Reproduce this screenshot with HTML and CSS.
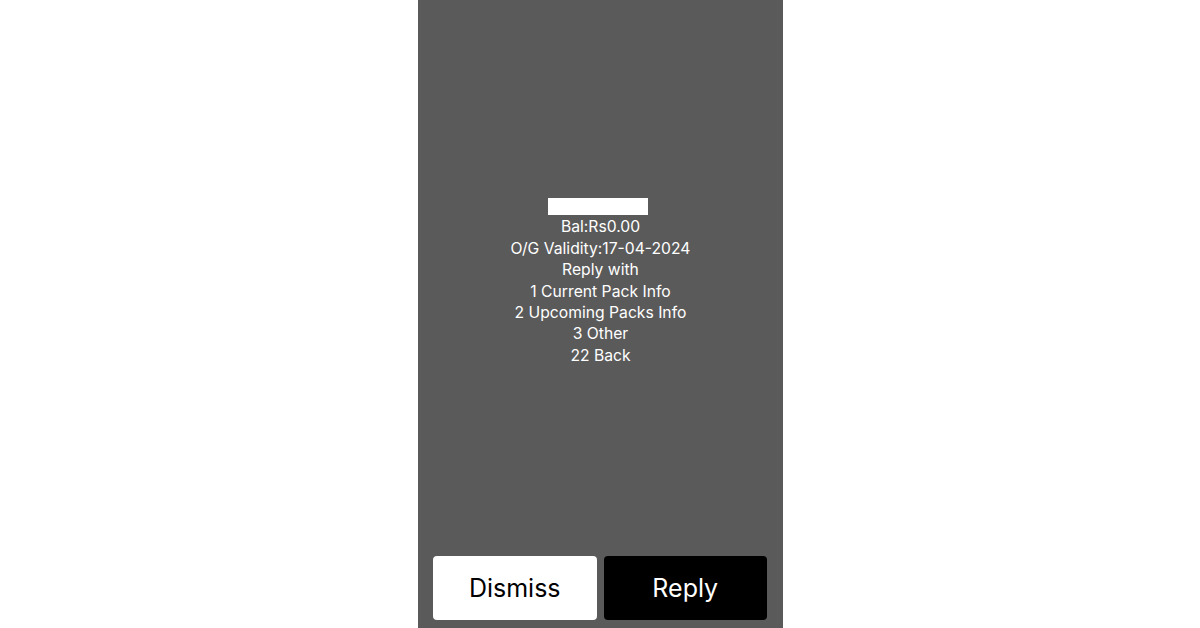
FILE: index.html
```html
<!DOCTYPE html>
<html>
<head>
<meta charset="utf-8">
<link rel="stylesheet" href="styles.css">
</head>
<body>
<div class="panel">
  <div class="content">
    <div class="message">
      <div class="redact"></div>
      <div class="line">Bal:Rs0.00</div>
      <div class="line">O/G Validity:17-04-2024</div>
      <div class="line">Reply with</div>
      <div class="line">1 Current Pack Info</div>
      <div class="line">2 Upcoming Packs Info</div>
      <div class="line">3 Other</div>
      <div class="line">22 Back</div>
    </div>
  </div>
  <div class="actions">
    <button class="btn btn-dismiss">Dismiss</button>
    <button class="btn btn-reply">Reply</button>
  </div>
</div>
</body>
</html>
```
FILE: styles.css
```css
html, body {
  margin: 0;
  padding: 0;
  background: #ffffff;
}
body {
  width: 1200px;
  height: 628px;
  overflow: hidden;
  font-family: Inter, "Noto Sans", sans-serif;
}
.panel {
  margin-left: 418px;
  width: 365px;
  height: 628px;
  background: #5a5a5a;
  display: flex;
  flex-direction: column;
}
.content {
  flex: 1;
  display: flex;
  align-items: center;
  justify-content: center;
  padding-top: 8px;
}
.message {
  display: flex;
  flex-direction: column;
  align-items: center;
  color: #ffffff;
  font-size: 15.7px;
  line-height: 21.4px;
  text-align: center;
}
.redact {
  width: 100px;
  height: 17px;
  margin-right: 6px;
  margin-bottom: 1.5px;
  background: #ffffff;
}
.actions {
  display: flex;
  gap: 7px;
  padding: 0 16px 8px 15px;
}
.btn {
  flex: 1;
  height: 64px;
  border: none;
  border-radius: 4px;
  font-family: Inter, "Noto Sans", sans-serif;
  font-size: 25px;
  padding: 0;
}
.btn-dismiss {
  background: #ffffff;
  color: #000000;
}
.btn-reply {
  background: #000000;
  color: #ffffff;
}
```
